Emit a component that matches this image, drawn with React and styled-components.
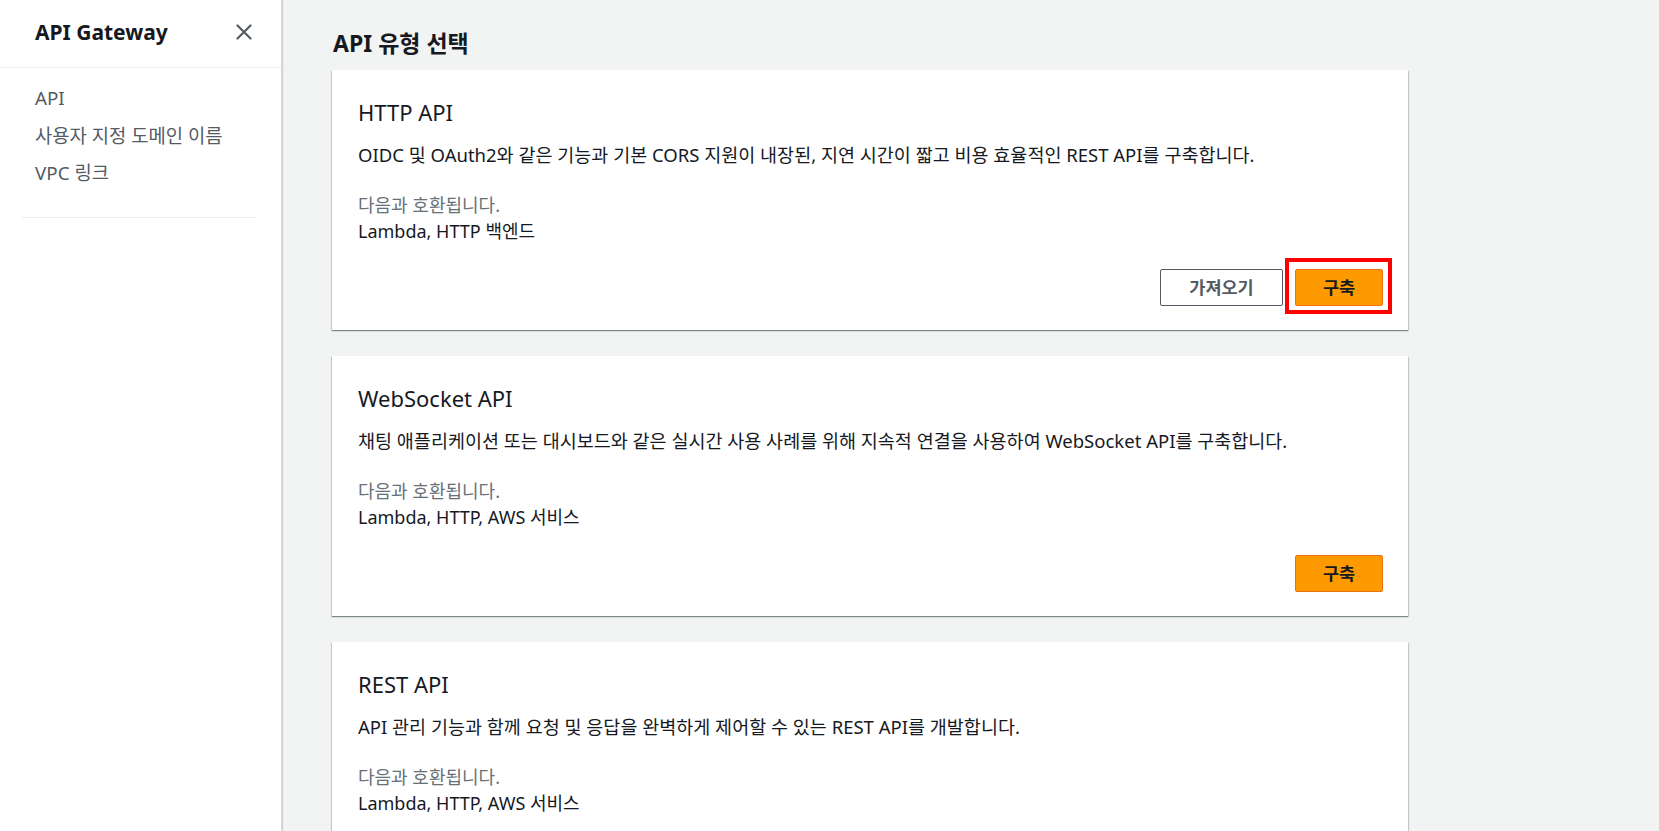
import React from "react";
import styled, { createGlobalStyle } from "styled-components";

const GlobalStyle = createGlobalStyle`
  html, body { margin: 0; padding: 0; }
  body {
    background: #f2f3f3;
    font-family: "Noto Sans", "Noto Sans CJK KR", sans-serif;
    color: #16191f;
  }
  * { box-sizing: border-box; }
`;

const Layout = styled.div`
  display: flex;
  min-height: 100vh;
`;

const Sidebar = styled.aside`
  width: 282px;
  flex: 0 0 282px;
  background: #fff;
  border-right: 1px solid #d5dbdb;
  box-shadow: 1px 0 1px rgba(0, 28, 36, 0.15);
`;

const SidebarHeader = styled.div`
  height: 68px;
  display: flex;
  align-items: center;
  justify-content: space-between;
  padding: 0 28px 4px 35px;
  border-bottom: 1px solid #eaeded;
`;

const SidebarTitle = styled.h2`
  margin: 0;
  font-size: 21px;
  font-weight: 700;
  line-height: 28px;
  color: #16191f;
`;

const CloseButton = styled.button`
  border: 0;
  background: none;
  padding: 0;
  width: 18px;
  height: 18px;
  display: flex;
  align-items: center;
  justify-content: center;
  cursor: pointer;
`;

const NavList = styled.ul`
  list-style: none;
  margin: 0;
  padding: 12px 0 0 35px;
`;

const NavItem = styled.li`
  font-size: 18.8px;
  line-height: 37.5px;
  color: #545b64;
`;

const SidebarDivider = styled.hr`
  border: 0;
  border-top: 1px solid #eaeded;
  margin: 24px 24px 0 22px;
`;

const Main = styled.main`
  flex: 1;
  padding: 29px 0 40px 50px;
`;

const Content = styled.div`
  width: 1076px;
  display: flex;
  flex-direction: column;
`;

const PageTitle = styled.h1`
  margin: 0 0 12px 1px;
  font-size: 23px;
  font-weight: 700;
  line-height: 29px;
  color: #16191f;
`;

const CardList = styled.div`
  display: flex;
  flex-direction: column;
  gap: 26px;
`;

const Card = styled.section`
  background: #fff;
  padding: 27px 25px 24px 26px;
  box-shadow: 0 1px 1px 0 rgba(0, 28, 36, 0.3),
    1px 1px 1px 0 rgba(0, 28, 36, 0.15),
    -1px 1px 1px 0 rgba(0, 28, 36, 0.15);
`;

const CardTitle = styled.h2`
  margin: 0;
  font-size: 22px;
  font-weight: 400;
  line-height: 30px;
  color: #16191f;
`;

const Description = styled.p`
  margin: 15px 0 0;
  font-size: 18.5px;
  line-height: 26px;
  color: #16191f;
`;

const Compat = styled.div`
  margin-top: 24px;
  font-size: 18px;
  line-height: 26px;
`;

const CompatLabel = styled.div`
  color: #687078;
`;

const CompatValue = styled.div`
  color: #16191f;
`;

const Actions = styled.div`
  display: flex;
  justify-content: flex-end;
  gap: 12px;
  margin-top: 25px;
`;

const Button = styled.button`
  position: relative;
  height: 37px;
  padding: 0 26px;
  border-radius: 2px;
  font-family: inherit;
  font-size: 17.5px;
  font-weight: 700;
  line-height: 1;
  cursor: pointer;
  border: 1px solid ${(p) => (p.$primary ? "#ec7211" : "#545b64")};
  background: ${(p) => (p.$primary ? "#ff9900" : "#fff")};
  color: ${(p) => (p.$primary ? "#16191f" : "#545b64")};
  min-width: ${(p) => (p.$primary ? "88px" : "123px")};
  ${(p) =>
    p.$highlight
      ? `&::after {
          content: "";
          position: absolute;
          top: -12px;
          bottom: -9px;
          left: -11px;
          right: -10px;
          border: 4px solid #ff0000;
          pointer-events: none;
        }`
      : ""}
`;

const CloseIcon = () => (
  <svg width="16" height="16" viewBox="0 0 16 16" aria-hidden="true">
    <path
      d="M1.5 1.5 L14.5 14.5 M14.5 1.5 L1.5 14.5"
      stroke="#545b64"
      strokeWidth="2.2"
      strokeLinecap="round"
      fill="none"
    />
  </svg>
);

const apis = [
  {
    title: "HTTP API",
    desc:
      "OIDC 및 OAuth2와 같은 기능과 기본 CORS 지원이 내장된, 지연 시간이 짧고 비용 효율적인 REST API를 구축합니다.",
    compat: "Lambda, HTTP 백엔드",
    importBtn: true,
    highlight: true,
  },
  {
    title: "WebSocket API",
    desc:
      "채팅 애플리케이션 또는 대시보드와 같은 실시간 사용 사례를 위해 지속적 연결을 사용하여 WebSocket API를 구축합니다.",
    compat: "Lambda, HTTP, AWS 서비스",
  },
  {
    title: "REST API",
    desc:
      "API 관리 기능과 함께 요청 및 응답을 완벽하게 제어할 수 있는 REST API를 개발합니다.",
    compat: "Lambda, HTTP, AWS 서비스",
    importBtn: true,
  },
];

export default function App() {
  return (
    <>
      <GlobalStyle />
      <Layout>
        <Sidebar>
          <SidebarHeader>
            <SidebarTitle>API Gateway</SidebarTitle>
            <CloseButton aria-label="닫기">
              <CloseIcon />
            </CloseButton>
          </SidebarHeader>
          <NavList>
            <NavItem>API</NavItem>
            <NavItem>사용자 지정 도메인 이름</NavItem>
            <NavItem>VPC 링크</NavItem>
          </NavList>
          <SidebarDivider />
        </Sidebar>
        <Main>
          <Content>
            <PageTitle>API 유형 선택</PageTitle>
            <CardList>
              {apis.map((api) => (
                <Card key={api.title}>
                  <CardTitle>{api.title}</CardTitle>
                  <Description>{api.desc}</Description>
                  <Compat>
                    <CompatLabel>다음과 호환됩니다.</CompatLabel>
                    <CompatValue>{api.compat}</CompatValue>
                  </Compat>
                  <Actions>
                    {api.importBtn && <Button>가져오기</Button>}
                    <Button $primary $highlight={api.highlight}>
                      구축
                    </Button>
                  </Actions>
                </Card>
              ))}
            </CardList>
          </Content>
        </Main>
      </Layout>
    </>
  );
}
